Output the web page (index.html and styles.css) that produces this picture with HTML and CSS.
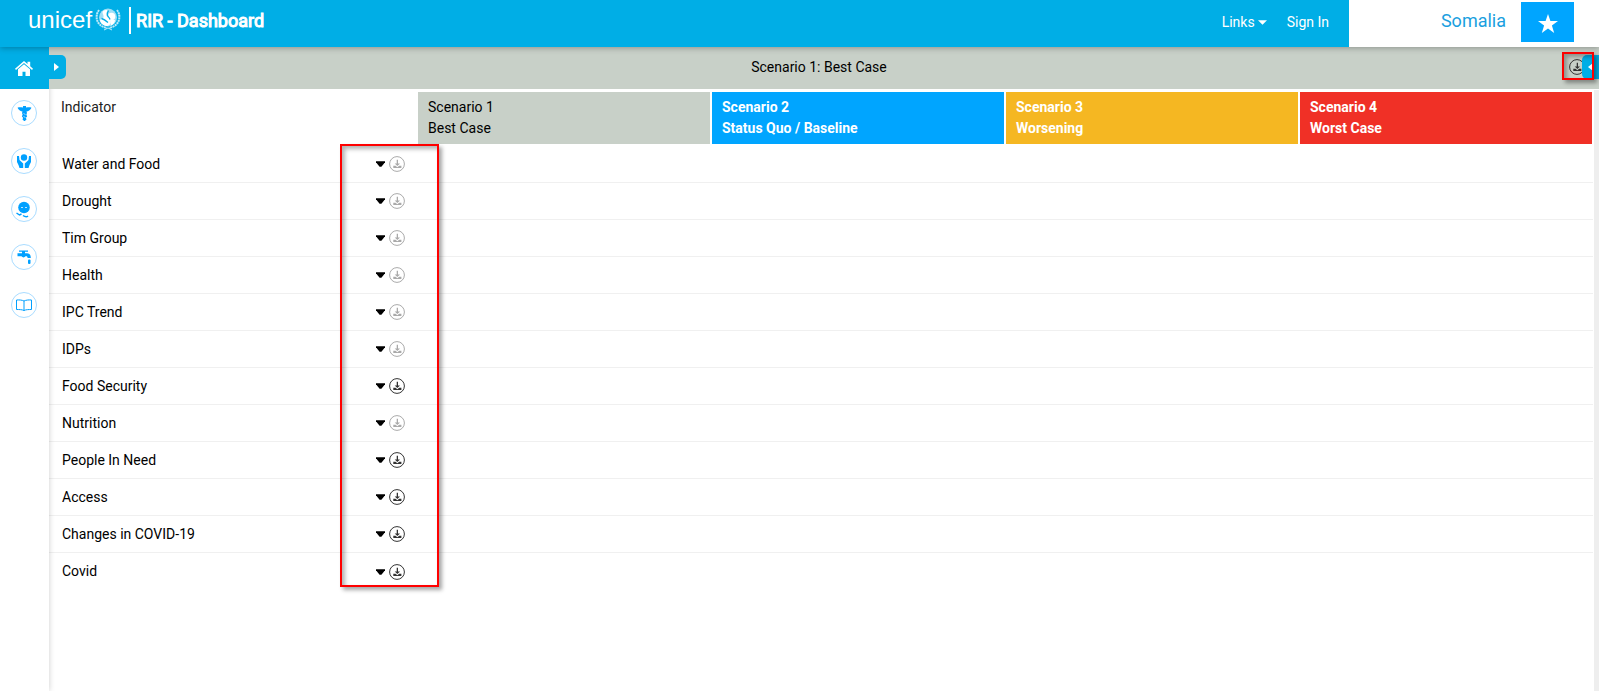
FILE: index.html
```html
<!DOCTYPE html>
<html lang="en">
<head>
<meta charset="utf-8">
<title>RIR - Dashboard</title>
<link rel="stylesheet" href="styles.css">
</head>
<body>
<svg class="defs" aria-hidden="true">
  <symbol id="download" viewBox="0 0 16 16">
    <circle cx="8" cy="8" r="7.4" fill="none" stroke="currentColor" stroke-width="1"/>
    <path d="M7.700 3.800h1.300v3.600h2L8.350 10 5.700 7.400h2zM4.300 9.800h2.200l1.850 1.400 1.850-1.400h2.200v2.300H4.300z" fill="currentColor"/>
  </symbol>
</svg>
<header class="topbar">
  <a class="brand" href="#">
    <span class="brand-word">unicef</span>
    <svg class="emblem" viewBox="0 0 26 24" aria-hidden="true">
      <circle cx="13" cy="10.500" r="9" fill="#9fdff6"/>
      <path d="M8 4c2-1.500 5-1.500 5 .5s-2 2-1.500 4 3 3 4 5.500-1 4.500-3 5c-4 0-7-2.500-7.500-6 1.500-1.500 3-.5 3.500-3S6.500 6 8 4z" fill="#fff"/>
      <circle cx="16.500" cy="9.500" r="3.800" fill="#fff"/>
      <path d="M15 13l5 0c0 2.500-1.500 4.500-4 5.500z" fill="#fff"/>
      <path d="M13.500 3.500c-1.500 2-1.500 3.500-1 5s2 2 2.500 4M6.500 11.500c2 .5 3.500 1.500 6.500 4" fill="none" stroke="#00aee6" stroke-width="1.300"/>
      <g fill="none" stroke="#bfeaf9" stroke-width="2" stroke-dasharray="2 .6">
        <path d="M4 3C-.5 9 1 19 12 21M22 3C26.500 9 25 19 14 21"/>
      </g>
      <path d="M9 23l4-2 4 2" fill="none" stroke="#bfeaf9"/>
    </svg>
    <span class="brand-title">RIR - Dashboard</span>
  </a>
  <nav class="links">
    <button class="link-button" type="button">Links <svg class="caret-small" viewBox="0 0 10 5" aria-hidden="true"><path d="M0 0h10L5 5z" fill="currentColor"/></svg></button>
    <a class="link" href="#">Sign In</a>
  </nav>
  <div class="country">
    <span>Somalia</span>
    <button class="star" type="button" aria-label="Somalia flag"><svg viewBox="0 0 20 19" aria-hidden="true"><path d="M10 0l2.400 7H20l-6.100 4.500L16.200 19 10 14.400 3.800 19l2.300-7.500L0 7h7.600z" fill="#fff"/></svg></button>
  </div>
</header>
<div class="shell">
  <aside class="sidebar">
    <a class="home" href="#" aria-label="Home"><svg viewBox="0 0 18 15" aria-hidden="true"><path d="M9 3.200l6 5V15h-4.500v-4.200h-3V15H3V8.200zM9 0l3.500 3V.8h2.700v4.500L18 7.800l-1 1.100-8-6.800-8 6.800L0 7.800z" fill="#fff"/></svg></a>
    <nav class="topics">
      <a class="topic" href="#" aria-label="Health"><svg viewBox="1 1 24 24" aria-hidden="true"><path d="M12 6h3v1.500c2 0 3.500-.6 5.500.3-1 2.200-3.500 3.700-5 3.700l.5 1.500-.6 1.500.7 2-1.200 1.200.6 1.800-1.600 1.500h-.8l-1.600-1.500.6-1.800-1.200-1.200.7-2-.6-1.500.5-1.500c-1.500 0-4-1.500-5-3.700 2-.9 3.500-.3 5.500-.3z" fill="currentColor"/><path d="M12.500 13.500l2 1M12.500 16.500l2 1" stroke="#9fd8ff"/></svg></a>
      <a class="topic" href="#" aria-label="Protection"><svg viewBox="1 1 24 24" aria-hidden="true"><circle cx="13" cy="9.500" r="3.200" fill="currentColor"/><path d="M6 8h2l.5 4 3.700 3.500V20H8.500l-1-3L6 14zM20 8h-2l-.5 4-3.700 3.500V20h3.700l1-3 1.500-3z" fill="currentColor"/></svg></a>
      <a class="topic" href="#" aria-label="Nutrition"><svg viewBox="1 1 24 24" aria-hidden="true"><circle cx="13" cy="11.500" r="5.800" fill="currentColor"/><path d="M10 11.500h2M14 11.500h2" stroke="#b9e2ff"/><path d="M5.500 17l3 2 2-1M12 19.500c2 1.500 4 1.500 5 .5" fill="none" stroke="currentColor" stroke-width="1.500"/></svg></a>
      <a class="topic" href="#" aria-label="Water"><svg viewBox="1 1 24 24" aria-hidden="true"><path d="M8 6.500h9v1.200h-3v1.600h2c2.500 0 3.800 1.500 3.800 4.700h-3.200c0-1.200-.4-1.700-1.500-1.700h-.600c-1 1.500-3 1.500-4 0H6.500V9.300H11V7.700H8z" fill="currentColor"/><rect x="17" y="15.500" width="2.500" height="4.500" rx="1" fill="currentColor"/></svg></a>
      <a class="topic" href="#" aria-label="Education"><svg viewBox="1 1 24 24" aria-hidden="true"><path d="M13 9c-2-1-4.500-1.200-7.500-1v9.500c2.500 0 5.500 0 7.500 1 2-1 5-1 7.500-1V8c-3-.2-5.500 0-7.500 1zv9.500" fill="none" stroke="currentColor" stroke-width="1"/></svg></a>
    </nav>
  </aside>
  <main class="content">
    <div class="scenario-bar">
      <button class="expand" type="button" aria-label="Expand menu"><svg viewBox="0 0 5 8" aria-hidden="true"><path d="M0 0l5 4-5 4z" fill="#fff"/></svg></button>
      <h1 class="scenario-title">Scenario 1: Best Case</h1>
      <button class="icon-button bar-download" type="button" aria-label="Download scenario"><svg class="download"><use href="#download"/></svg></button>
      <button class="collapse" type="button" aria-label="Open panel"><svg viewBox="0 0 5 8" aria-hidden="true"><path d="M5 0L0 4l5 4z" fill="#fff"/></svg></button>
      <div class="callout callout-bar"></div>
    </div>
    <div class="board">
      <div class="table-area">
        <table class="grid">
          <thead>
            <tr>
              <th class="name-col">Indicator</th>
              <th class="tools-col"></th>
              <th class="scenario best">Scenario 1<br>Best Case</th>
              <th class="scenario baseline">Scenario 2<br>Status Quo / Baseline</th>
              <th class="scenario worsening">Scenario 3<br>Worsening</th>
              <th class="scenario worst">Scenario 4<br>Worst Case</th>
            </tr>
          </thead>
          <tbody id="rows"></tbody>
        </table>
        <div class="callout callout-tools"></div>
      </div>
      <div class="gutter"></div>
    </div>
  </main>
</div>
<script src="rows.js"></script>
</body>
</html>
```
FILE: rows.js
```js
const indicators = [
  ["Water and Food", false], ["Drought", false], ["Tim Group", false],
  ["Health", false], ["IPC Trend", false], ["IDPs", false],
  ["Food Security", true], ["Nutrition", false], ["People In Need", true],
  ["Access", true], ["Changes in COVID-19", true], ["Covid", true]
];

document.getElementById("rows").innerHTML = indicators.map(([name, ready]) => `
  <tr>
    <td class="name">${name}</td>
    <td><div class="tools">
      <button class="icon-button" type="button" aria-label="Expand ${name}"><svg class="caret" viewBox="0 0 10 6"><path d="M0 0h10v1L6 6H4L0 1z" fill="currentColor"/></svg></button>
      <button class="icon-button ready" type="button" aria-label="Download ${name}" ${ready ? "" : "disabled"}><svg class="download"><use href="#download"/></svg></button>
    </div></td>
    <td colspan="4"></td>
  </tr>`).join("");
```
FILE: styles.css
```css
* { box-sizing: border-box; }
body {
  margin: 0;
  min-height: 100vh;
  display: flex;
  flex-direction: column;
  font: 14px/21px Roboto, "Liberation Sans", sans-serif;
  color: #000;
  background: #fff;
}
svg { display: block; }
button { margin: 0; padding: 0; border: 0; background: none; font: inherit; color: inherit; }
a { color: inherit; text-decoration: none; }
.defs { position: absolute; width: 0; height: 0; }

.topbar {
  position: relative;
  z-index: 3;
  display: flex;
  align-items: stretch;
  height: 47px;
  color: #fff;
  background: #00aee6;
  box-shadow: 0 1px 6px rgba(0, 0, 0, .3);
}
.brand { display: flex; align-items: flex-start; padding: 7px 0 0 28px; }
.brand-word { font: 24px/26px "Liberation Sans", sans-serif; }
.emblem { width: 26px; height: 24px; margin: 0 8px 0 3px; }
.brand-title {
  padding-left: 5px;
  border-left: 2px solid #fff;
  font-size: 18px;
  line-height: 27px;
  -webkit-text-stroke: 1px #fff;
}
.links { display: flex; align-items: center; gap: 20px; margin-left: auto; padding-right: 20px; padding-bottom: 3px; }
.link-button { display: flex; align-items: center; gap: 3px; }
.caret-small { width: 9px; height: 5px; }
.country {
  display: flex;
  align-items: flex-start;
  justify-content: flex-end;
  gap: 15px;
  width: 250px;
  padding: 2px 25px 0 0;
  background: #fff;
  color: #1a9fe0;
  font-size: 18px;
  line-height: 37px;
}
.star { display: flex; align-items: center; justify-content: center; width: 53px; height: 40px; background: #00a5ff; }
.star svg { width: 20px; height: 19px; margin-top: 2px; }

.shell { flex: 1; display: flex; }
.sidebar { position: relative; z-index: 1; width: 49px; background: #fff; box-shadow: 0 0 6px rgba(0, 0, 0, .2); }
.home { display: flex; align-items: center; justify-content: center; height: 42px; padding-right: 1px; background: #00aee6; }
.home svg { width: 18px; height: 15px; }
.topics { display: flex; flex-direction: column; align-items: center; gap: 22px; padding: 11px 1px 0 0; }
.topic { width: 26px; height: 26px; border: 1px solid #a9dcff; border-radius: 50%; color: #00a0ff; }

.content { flex: 1; display: flex; flex-direction: column; min-width: 0; }
.scenario-bar { position: relative; z-index: 2; display: flex; align-items: center; height: 42px; padding-bottom: 2px; background: #c8d0c8; }
.scenario-title { flex: 1; margin: 0; padding-left: 3px; font-size: 14px; font-weight: 400; line-height: 20px; text-align: center; }
.expand, .collapse { display: flex; align-items: center; justify-content: center; height: 24px; background: #00aee6; }
.expand { width: 17px; padding-right: 2px; border-radius: 0 5px 5px 0; }
.collapse { width: 17px; border-radius: 5px 0 0 5px; }
.expand svg, .collapse svg { width: 5px; height: 8px; }
.icon-button { display: flex; }
.icon-button.ready { color: #333; }
.icon-button:disabled { color: #aaa; }
.bar-download { color: #333; margin-right: -3px; }
.download { width: 16px; height: 16px; color: inherit; }
.caret { width: 9px; height: 6px; }

.board { flex: 1; display: flex; gap: 1px; padding-top: 1px; }
.table-area { position: relative; flex: 1; }
.gutter { width: 5px; background: #eee; }
.grid { width: 100%; border-collapse: separate; border-spacing: 0; table-layout: fixed; }
.grid th, .grid td { padding: 0; text-align: left; }
.grid th { padding: 7px 0 0 12px; vertical-align: top; font-weight: 400; }
.grid .name-col { width: 310px; color: #222; }
.grid .tools-col { width: 58px; }
.grid .scenario { padding: 5px 10px; border: solid #fff; border-width: 2px 1px; }
.grid .best { background-color: #c8d0c8; }
.grid .baseline { background-color: #00a5ff; }
.grid .worsening { background-color: #f5b722; }
.grid .worst { background-color: #f03026; }
.grid .baseline, .grid .worsening, .grid .worst { color: #fff; font-weight: 700; }
.grid td { height: 37px; border-bottom: 1px solid #f0f0f0; }
.grid tr:last-child td { border-bottom: 0; }
.grid .name { padding-left: 13px; }
.tools { display: flex; align-items: center; gap: 4px; padding-left: 17px; }

.callout { position: absolute; border: 2px solid #f00; box-shadow: 3px 3px 4px rgba(0, 0, 0, .35), inset 3px 3px 4px rgba(0, 0, 0, .3); pointer-events: none; }
.callout-bar { top: 5px; right: 5px; width: 32px; height: 28px; }
.callout-tools { top: 54px; left: 291px; width: 99px; height: 443px; }
```
